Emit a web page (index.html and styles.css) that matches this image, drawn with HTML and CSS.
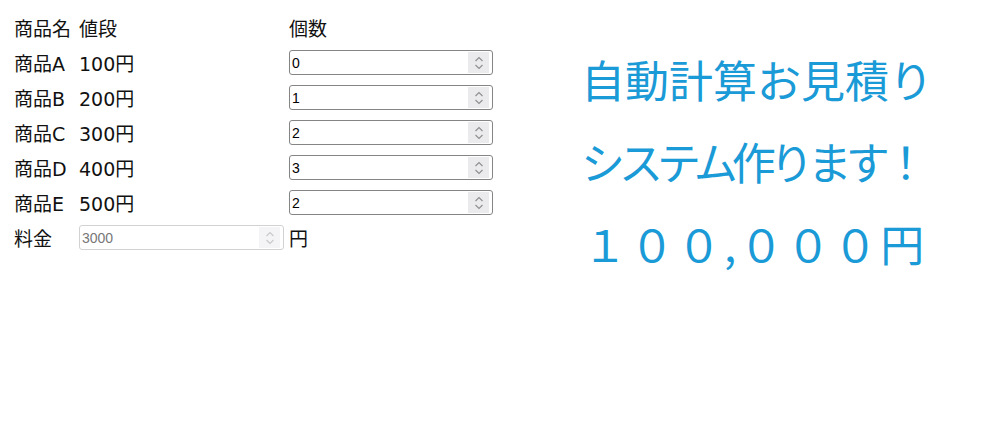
FILE: index.html
```html
<!DOCTYPE html>
<html lang="ja">
<head>
  <meta charset="UTF-8">
  <title>自動計算お見積り</title>
  <link rel="stylesheet" href="styles.css">
</head>
<body>
  <div class="page">
    <div class="estimate">
      <div class="cell">商品名</div>
      <div class="cell">値段</div>
      <div class="cell">個数</div>

      <div class="cell">商品A</div>
      <div class="cell">100円</div>
      <div class="cell"><div class="num"><input type="text" value="0"><span class="spin"><svg width="10" height="16" viewBox="0 0 10 16"><path d="M1.5 6 L5 2.5 L8.5 6 M1.5 10 L5 13.5 L8.5 10" fill="none" stroke="#909090" stroke-width="1.2"/></svg></span></div></div>

      <div class="cell">商品B</div>
      <div class="cell">200円</div>
      <div class="cell"><div class="num"><input type="text" value="1"><span class="spin"><svg width="10" height="16" viewBox="0 0 10 16"><path d="M1.5 6 L5 2.5 L8.5 6 M1.5 10 L5 13.5 L8.5 10" fill="none" stroke="#909090" stroke-width="1.2"/></svg></span></div></div>

      <div class="cell">商品C</div>
      <div class="cell">300円</div>
      <div class="cell"><div class="num"><input type="text" value="2"><span class="spin"><svg width="10" height="16" viewBox="0 0 10 16"><path d="M1.5 6 L5 2.5 L8.5 6 M1.5 10 L5 13.5 L8.5 10" fill="none" stroke="#909090" stroke-width="1.2"/></svg></span></div></div>

      <div class="cell">商品D</div>
      <div class="cell">400円</div>
      <div class="cell"><div class="num"><input type="text" value="3"><span class="spin"><svg width="10" height="16" viewBox="0 0 10 16"><path d="M1.5 6 L5 2.5 L8.5 6 M1.5 10 L5 13.5 L8.5 10" fill="none" stroke="#909090" stroke-width="1.2"/></svg></span></div></div>

      <div class="cell">商品E</div>
      <div class="cell">500円</div>
      <div class="cell"><div class="num"><input type="text" value="2"><span class="spin"><svg width="10" height="16" viewBox="0 0 10 16"><path d="M1.5 6 L5 2.5 L8.5 6 M1.5 10 L5 13.5 L8.5 10" fill="none" stroke="#909090" stroke-width="1.2"/></svg></span></div></div>

      <div class="cell">料金</div>
      <div class="cell"><div class="num disabled"><input type="text" value="3000" disabled><span class="spin"><svg width="10" height="16" viewBox="0 0 10 16"><path d="M1.5 6 L5 2.5 L8.5 6 M1.5 10 L5 13.5 L8.5 10" fill="none" stroke="#cacaca" stroke-width="1.2"/></svg></span></div></div>
      <div class="cell">円</div>
    </div>

    <div class="promo">
      <div class="line one">自動計算お見積り</div>
      <div class="line two">システム作ります！</div>
      <div class="line three">１００,０００円</div>
    </div>
  </div>
</body>
</html>
```

FILE: styles.css
```css
body {
  margin: 0;
  background: #ffffff;
  color: #111111;
  font-family: "DejaVu Sans", "Noto Sans CJK JP", sans-serif;
}
.page {
  display: flex;
  align-items: flex-start;
  padding: 10px 0 0 14px;
}
.estimate {
  display: grid;
  grid-template-columns: 65px 210px 204px;
  grid-auto-rows: 35px;
  font-size: 19px;
}
.cell {
  display: flex;
  align-items: center;
  white-space: nowrap;
}
.num {
  display: flex;
  align-items: center;
  width: 204px;
  height: 25px;
  box-sizing: border-box;
  border: 1px solid #858585;
  border-radius: 3px;
  padding: 0 3px 0 0;
  background: #ffffff;
}
.num input {
  flex: 1;
  min-width: 0;
  border: none;
  outline: none;
  padding: 0 0 0 2px;
  margin: 0;
  font-family: "Liberation Sans", Arial, sans-serif;
  font-size: 14px;
  color: #000000;
  background: transparent;
}
.spin {
  display: flex;
  align-items: center;
  justify-content: center;
  width: 21px;
  height: 21px;
  background: #ebebee;
}
.num.disabled {
  width: 205px;
  border-color: #d2d2d2;
}
.num.disabled input {
  color: #777777;
}
.num.disabled .spin {
  background: #f4f4f6;
}
.promo {
  margin: 28px 0 0 88px;
  color: #1a9ad6;
  font-family: "Noto Sans CJK JP", sans-serif;
  font-size: 44px;
  line-height: 82px;
  white-space: nowrap;
}
.line.two {
  letter-spacing: -6px;
}
.line.three {
  padding-left: 2px;
  letter-spacing: 3px;
}
```
